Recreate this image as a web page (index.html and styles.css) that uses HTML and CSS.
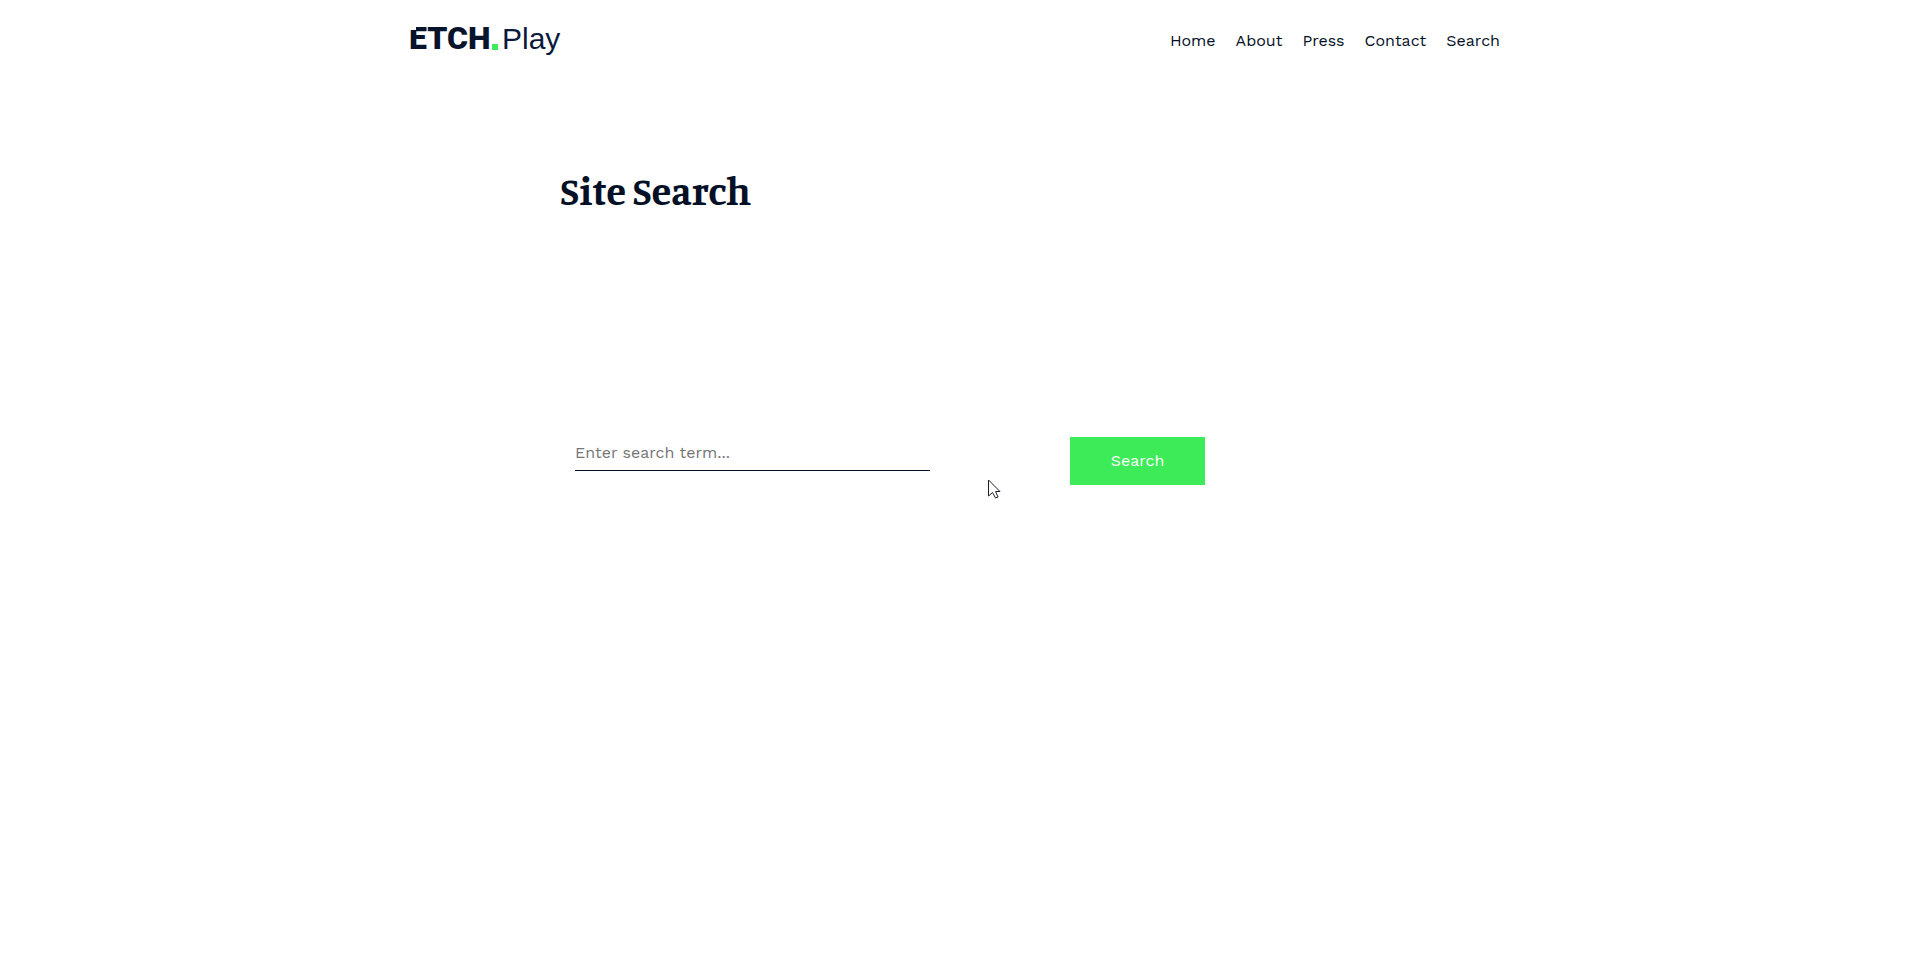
FILE: index.html
```html
<!DOCTYPE html>
<html lang="en">
<head>
<meta charset="utf-8">
<meta name="viewport" content="width=device-width, initial-scale=1">
<title>Site Search</title>
<link rel="stylesheet" href="styles.css">
</head>
<body>
<header class="header">
  <a class="logo" href="#" aria-label="Etch Play">
    <svg class="logo-art" width="160" height="48" viewBox="-4 -6 160 48">
      <text class="logo-etch" x="-1" y="27">ETCH</text>
      <path fill="#fff" d="M-2 3H6V8H-2Z"/>
      <rect x="82" y="22" width="6" height="6" fill="#3dea57"/>
      <text class="logo-play" x="92" y="27">Play</text>
    </svg>
  </a>
  <nav class="nav">
    <a href="#">Home</a>
    <a href="#">About</a>
    <a href="#">Press</a>
    <a href="#">Contact</a>
    <a href="#">Search</a>
  </nav>
</header>
<main class="main">
  <h1 class="title">Site Search</h1>
  <form class="form">
    <input class="field" type="text" aria-label="Search term" placeholder="Enter search term...">
    <button class="button" type="button">Search</button>
  </form>
</main>
<svg class="cursor" width="14" height="21" viewBox="0 0 14 21" aria-hidden="true">
  <path d="M.5 1V17L4.500 13.500L7.500 19L10 18L7.500 12.500H12Z" fill="#fff" stroke="#20202c"/>
</svg>
</body>
</html>
```
FILE: styles.css
```css
* { box-sizing: border-box; }
body {
  margin: 0;
  background: #fff;
  color: #031026;
  font: 16px/24px "Work Sans", Inter, "Open Sans", sans-serif;
}
.header {
  display: flex;
  justify-content: space-between;
  align-items: center;
  max-width: 1108px;
  height: 80px;
  margin: 0 auto;
}
.logo { display: block; }
.logo-art { display: block; overflow: visible; }
.logo-etch { font: 900 32px Roboto, sans-serif; fill: #07142b; }
.logo-play { font: 400 30px "Liberation Sans", sans-serif; fill: #0b1a3c; }
.nav { display: flex; gap: 20px; padding: 2px 14px 0 0; }
.nav a { color: inherit; text-decoration: none; }
.main { max-width: 800px; margin: 0 auto; padding-top: 88px; }
.title { margin: 0; font: 700 40px/44px Manuale, "Liberation Serif", serif; }
.form {
  display: grid;
  grid-template-columns: 355px 135px;
  column-gap: 140px;
  align-items: start;
  margin-top: 225px;
  padding: 0 15px;
}
.field {
  width: 100%;
  height: 34px;
  padding: 0 0 2px;
  border: 0;
  border-bottom: 1px solid #031026;
  border-radius: 0;
  background: transparent;
  font: inherit;
  color: inherit;
  outline: 0;
}
.field::placeholder { color: #757575; opacity: 1; }
.button {
  height: 48px;
  border: 0;
  background: #3dea57;
  color: #fff;
  font: inherit;
}
.cursor { position: absolute; left: 988px; top: 479px; }
```
